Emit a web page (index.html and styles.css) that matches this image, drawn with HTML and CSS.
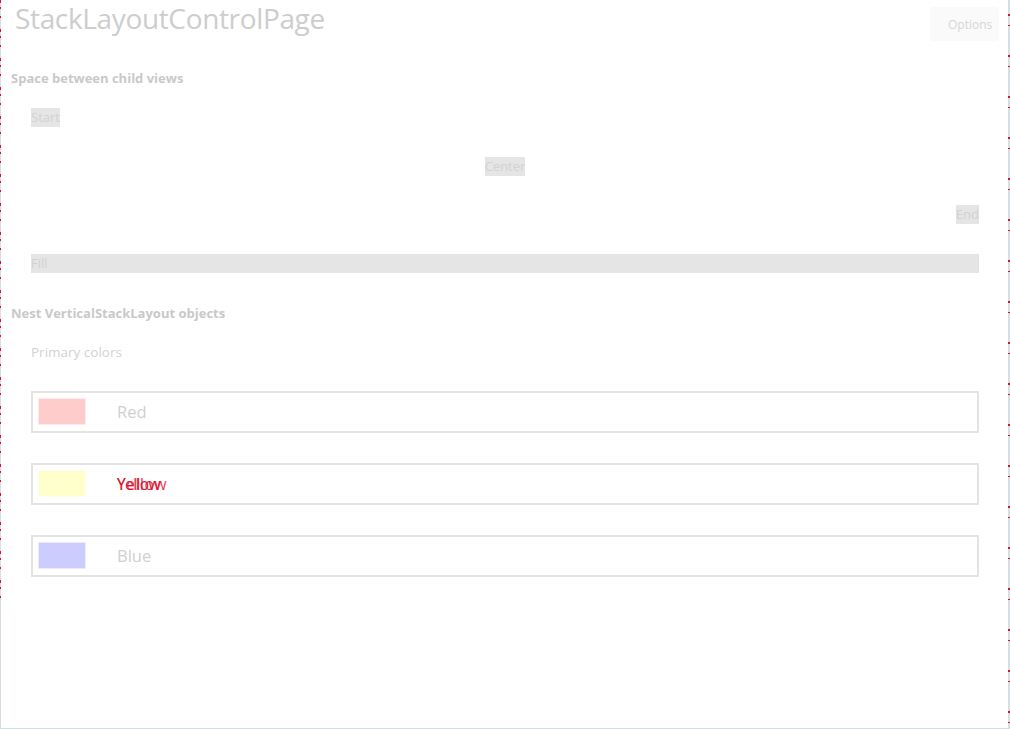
FILE: index.html
```html
<!DOCTYPE html>
<html lang="en">
<head>
<meta charset="utf-8">
<title>StackLayoutControlPage</title>
<link rel="stylesheet" href="styles.css">
</head>
<body>
<div class="window">
  <header class="topbar">
    <h1 class="page-title">StackLayoutControlPage</h1>
    <button class="options-btn">Options</button>
  </header>

  <section class="section">
    <h2 class="section-title first">Space between child views</h2>
    <div class="align-stack">
      <div class="align-row start"><span class="chip">Start</span></div>
      <div class="align-row center"><span class="chip">Center</span></div>
      <div class="align-row end"><span class="chip">End</span></div>
      <div class="align-row fill"><span class="chip">Fill</span></div>
    </div>
  </section>

  <section class="section">
    <h2 class="section-title">Nest VerticalStackLayout objects</h2>
    <div class="nested">
      <p class="caption">Primary colors</p>
      <div class="color-frame">
        <span class="swatch red"></span>
        <span class="color-name">Red</span>
      </div>
      <div class="color-frame">
        <span class="swatch yellow"></span>
        <span class="color-name overdraw"><span class="ghost">Yellow</span><span class="ghost shifted">Yellow</span></span>
      </div>
      <div class="color-frame">
        <span class="swatch blue"></span>
        <span class="color-name">Blue</span>
      </div>
    </div>
  </section>
</div>
</body>
</html>
```

FILE: styles.css
```css
html, body {
  margin: 0;
  padding: 0;
  background: #ffffff;
}

body {
  font-family: "Open Sans", "Noto Sans", sans-serif;
  color: #d0d0d0;
}

.window {
  position: relative;
  box-sizing: border-box;
  width: 1010px;
  height: 729px;
  padding: 0 2px 0 1px;
  border-bottom: 1px solid #d3dee5;
  overflow: hidden;
}

/* window edges: pale frame line with red ticks */
.window::before,
.window::after {
  content: "";
  position: absolute;
  top: 0;
  bottom: 0;
  pointer-events: none;
}
.window::before {
  left: 0;
  width: 1px;
  background:
    repeating-linear-gradient(180deg,
      #e0102e 0 3px, transparent 3px 7px, #e0102e 7px 9px, transparent 9px 16px,
      #e0102e 16px 18px, transparent 18px 29px) 0 0 / 1px 600px no-repeat,
    #d3dee5;
}
.window::after {
  right: 0;
  width: 2px;
  background:
    repeating-linear-gradient(180deg,
      transparent 0 14px, #d8102a 14px 16px, transparent 16px 25px,
      #d8102a 25px 26px, transparent 26px 41px),
    #d3dee5;
}

.topbar {
  display: flex;
  justify-content: space-between;
  align-items: flex-start;
  height: 41px;
  padding: 0 9px 0 14px;
}

.page-title {
  margin: 0;
  font-size: 28px;
  font-weight: 400;
  line-height: 36px;
  letter-spacing: -0.35px;
  color: #cdcdcd;
}

.options-btn {
  margin-top: 7px;
  width: 69px;
  height: 34px;
  border: none;
  border-radius: 3px;
  background: #fafafa;
  font-family: inherit;
  font-size: 12px;
  color: #d6d6d6;
  padding: 0 8px 0 18px;
  text-align: left;
}

.section {
  padding: 0 29px 0 10px;
}

.section-title {
  margin: 31px 0 0;
  font-size: 13px;
  font-weight: 700;
  color: #c9c9c9;
  line-height: 18px;
}

.section-title.first {
  margin-top: 28px;
}

.align-stack {
  display: flex;
  flex-direction: column;
  gap: 29.67px;
  padding: 21px 0 0 20px;
}

.align-row {
  display: flex;
  height: 19px;
}
.align-row.center { justify-content: center; }
.align-row.end { justify-content: flex-end; }

.chip {
  display: inline-block;
  height: 19px;
  line-height: 19px;
  background: #e5e5e5;
  color: #d2d2d2;
  font-size: 13px;
}

.align-row.fill .chip { flex: 1; }

.nested {
  padding: 20px 0 0 20px;
}

.caption {
  margin: 0 0 29px;
  font-size: 13.5px;
  line-height: 20px;
  color: #d2d2d2;
}

.color-frame {
  display: flex;
  align-items: center;
  gap: 31px;
  box-sizing: border-box;
  height: 42px;
  border: 2px solid #e3e3e3;
  padding: 0 5px;
  margin-bottom: 30px;
}

.swatch {
  width: 48px;
  height: 27px;
  box-sizing: border-box;
  border: 1px solid rgba(255, 255, 255, 0.6);
}
.swatch.red { background: #ffcccc; }
.swatch.yellow { background: #ffffcc; }
.swatch.blue { background: #ccccff; }

.color-name {
  font-size: 16.5px;
  line-height: 22px;
  color: #d0d0d0;
}

.overdraw {
  display: grid;
}
.overdraw .ghost {
  grid-area: 1 / 1;
  color: #dc1432;
  font-size: 15.5px;
  letter-spacing: -0.6px;
}
.overdraw .shifted {
  letter-spacing: 0.6px;
  opacity: 0.85;
}
```
